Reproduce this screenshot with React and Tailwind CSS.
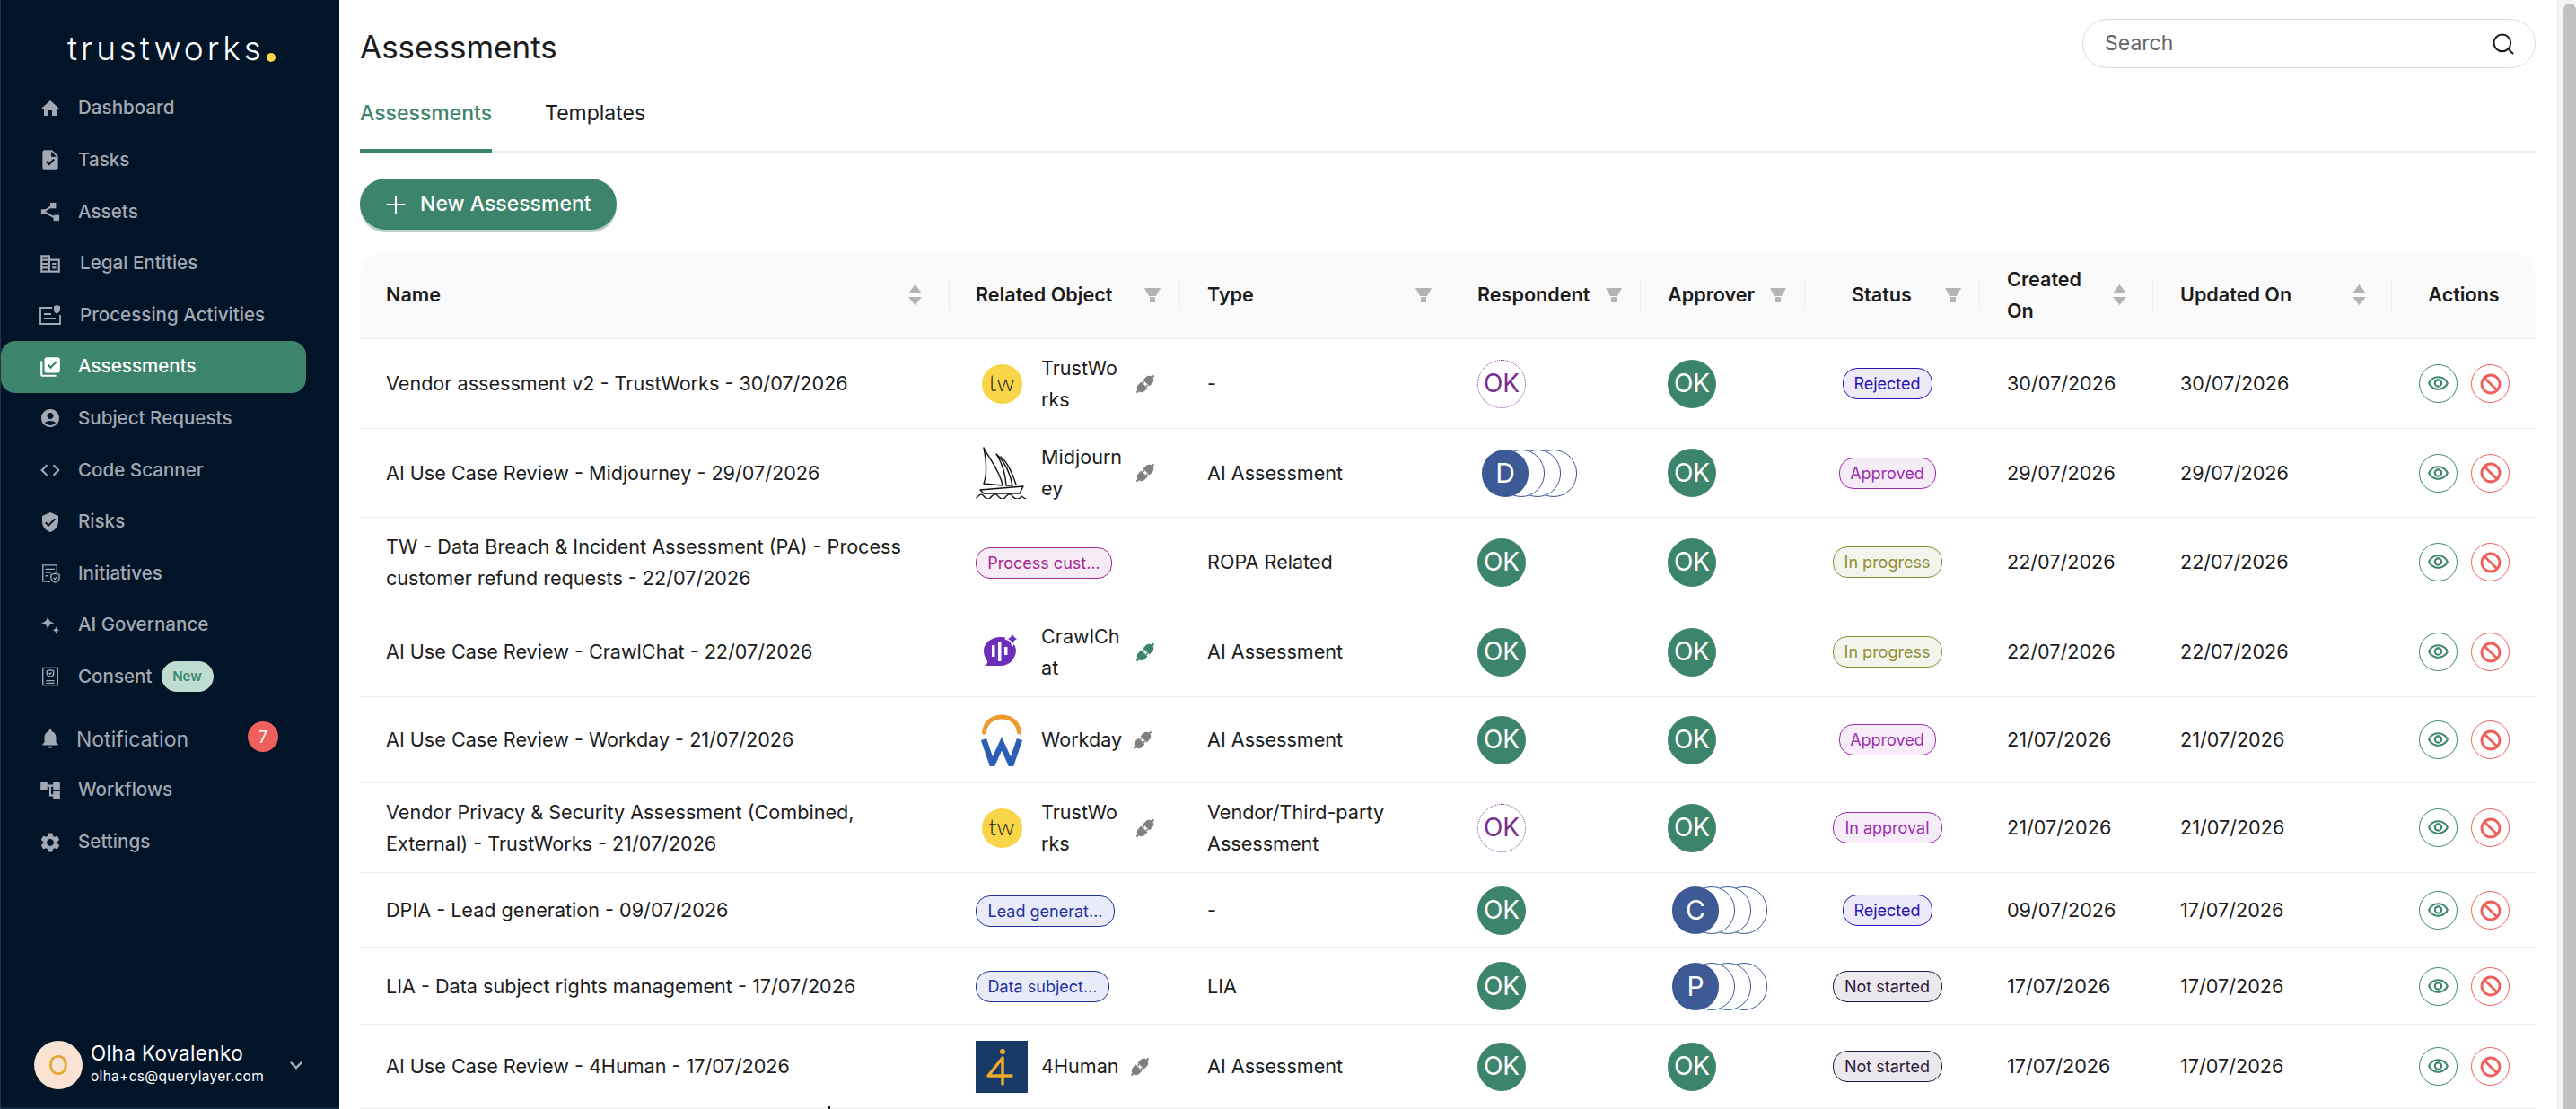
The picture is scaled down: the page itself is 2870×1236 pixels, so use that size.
import React from "react";
import {
  MdHome, MdTask, MdOutlineCorporateFare, MdLibraryAddCheck, MdAccountCircle, MdCode, MdVerifiedUser,
  MdNotifications, MdAccountTree, MdSettings, MdKeyboardArrowDown, MdOutlineVisibility,
} from "react-icons/md";
import { Plus, Search, Ban } from "lucide-react";

const AssetsIcon = (p) => (
  <svg viewBox="0 0 24 24" fill="currentColor" {...p}>
    <rect x="12" y="1" width="7" height="7" /><rect x="1" y="9" width="6" height="6" /><rect x="16" y="16" width="7" height="7" />
    <path d="M14 5 4 12l15 8" fill="none" stroke="currentColor" strokeWidth="2.2" />
  </svg>
);
const ProcessingIcon = (p) => (
  <svg viewBox="0 0 24 24" fill="none" stroke="currentColor" strokeWidth="1.8" {...p}>
    <path d="M14 4H1v18h22V12" /><path d="M5 11h8M5 16h13" />
    <path d="M19 1l4 1.2v4c0 2-2 3.5-4 4.3-2-.8-3-2.3-3-4.3v-4z" fill="currentColor" stroke="none" />
  </svg>
);
const InitiativesIcon = (p) => (
  <svg viewBox="0 0 24 24" fill="none" stroke="currentColor" strokeWidth="1.5" {...p}>
    <path d="M12 22H3V2h17v9" /><path d="M6 7h11M6 11h7M6 15h4" />
    <path d="M18 12l5 1.6v4c0 2.6-2.5 4.4-5 5.4-2.5-1-5-2.8-5-5.4v-4z" /><path d="M16 17.5l1.5 1.5 3-3" />
  </svg>
);
const ConsentIcon = (p) => (
  <svg viewBox="0 0 24 24" fill="none" stroke="currentColor" strokeWidth="1.5" {...p}>
    <rect x="3" y="1.5" width="18" height="21" /><path d="M7 17h10M7 20h10" />
    <path d="M12 4l4 1.2v3.3c0 2-2 3.3-4 4-2-.7-4-2-4-4V5.2z" /><path d="M10.5 8l1 1 2-2" />
  </svg>
);
const SparkIcon = (p) => (
  <svg viewBox="0 0 24 24" fill="currentColor" {...p}>
    <path d="M9 0c.6 5.5 2.500 8 8 9-5.500 1-7.400 3.500-8 9-.6-5.500-2.500-8-8-9 5.500-1 7.400-3.500 8-9z" />
    <path d="M19 13c.3 3 1.300 4.200 4.500 4.800-3.200.6-4.200 1.800-4.500 5.200-.3-3.400-1.300-4.600-4.500-5.200 3.200-.6 4.200-1.800 4.500-4.800z" />
  </svg>
);
const Plug = ({ className }) => (
  <svg viewBox="0 0 24 24" fill="currentColor" className={className}>
    <g transform="rotate(45 12 12)">
      <path d="M7 10.500V6a5 5 0 0 1 10 0v4.500z" /><rect x="11" y="-1.500" width="2" height="3.500" />
      <path d="M7 13.500h10V18a5 5 0 0 1-10 0z" /><rect x="11" y="22" width="2" height="3.500" />
      <rect x="8.500" y="11" width="1.800" height="2" /><rect x="13.700" y="11" width="1.800" height="2" />
    </g>
  </svg>
);
const SortIcon = () => (
  <svg viewBox="0 0 15 23" className="w-[15px] h-[23px] shrink-0 text-[#b4b4b4]" fill="currentColor">
    <path d="M7.500 0 15 10H0zM0 14h15l-7.500 9z" />
  </svg>
);
const FilterIcon = () => (
  <svg viewBox="0 0 18 16" className="w-[18px] h-[16px] shrink-0 text-[#b4b4b4]" fill="currentColor">
    <path d="M0 0h18l-5 9H5zM6 10h6v6H6z" />
  </svg>
);

const TwLogo = () => (
  <div className="w-[45px] h-[44px] rounded-full bg-[#f9d548] flex items-center justify-center text-[26px] leading-none font-light text-[#1f1f1f] font-['Lato',sans-serif] pb-[3px]">tw</div>
);
const MjLogo = () => (
  <svg viewBox="0 0 58 58" className="w-[58px] h-[58px]" fill="none" stroke="#111" strokeWidth="1.400" strokeLinejoin="round" strokeLinecap="round">
    <path d="M9 1C13 10 27 26 30 43L9 41c3-8 4-20 0-40z" />
    <path d="M23 8c8 7 15 20 18 35l-7 0C33 28 29 17 23 8z" />
    <path d="M28 11c7 6 13 18 17 31" />
    <path d="M5 48l48-4-4 8H9z" />
    <path d="M1 57c4-5 6-5 9-1 3 3 5 3 8-1 3-3 5-3 8 1 3 3 6 3 8-1 3-3 5-3 8 1 3 3 7 3 9-1l6 4" />
  </svg>
);
const CrawlLogo = () => (
  <svg viewBox="0 0 58 58" className="w-[58px] h-[58px]">
    <path d="M28 12a17 17 0 0 1 17 14c0 10-7 18-17 18H10c3-2 4-4 2-7-2-3-3-6-3-10 0-8 8-15 19-15z" fill="#6d2eb8" />
    <rect x="18" y="21" width="3.500" height="13" fill="#fff" /><rect x="25" y="17" width="3.500" height="22" fill="#fff" />
    <rect x="32" y="23" width="3.500" height="9" fill="#fff" />
    <path d="M41 6c1.200 5 3 7 8 8-5 1-6.800 3-8 8-1.200-5-3-7-8-8 5-1 6.800-3 8-8z" fill="#6d2eb8" stroke="#fff" strokeWidth="1.500" />
  </svg>
);
const WdLogo = () => (
  <svg viewBox="0 0 58 58" className="w-[58px] h-[58px]" fill="none">
    <path d="M9.500 20C11 8 20 3 29 3s18 5 19.500 17" stroke="#ee9a33" strokeWidth="5" strokeLinecap="round" />
    <path d="M9 28l9.500 28L29 33l10.500 23L49 28" stroke="#2a5fb5" strokeWidth="6.500" />
  </svg>
);
const FhLogo = () => (
  <svg viewBox="0 0 58 58" className="w-[58px] h-[58px]">
    <rect width="58" height="58" fill="#183a66" />
    <circle cx="30" cy="12" r="3" fill="#eea92d" />
    <path d="M30 19 14 39h26M30 19v29" stroke="#eea92d" strokeWidth="3.500" fill="none" strokeLinecap="round" strokeLinejoin="round" />
  </svg>
);

const nav = [
  ["Dashboard", MdHome, "w-[24px] h-[24px]"],
  ["Tasks", MdTask, "w-[26px] h-[26px]"],
  ["Assets", AssetsIcon, "w-[22px] h-[22px]"],
  ["Legal Entities", MdOutlineCorporateFare, "w-[26px] h-[26px]"],
  ["Processing Activities", ProcessingIcon, "w-[24px] h-[24px]"],
  ["Assessments", MdLibraryAddCheck, "w-[26px] h-[26px]"],
  ["Subject Requests", MdAccountCircle, "w-[24px] h-[24px]"],
  ["Code Scanner", MdCode, "w-[26px] h-[26px]"],
  ["Risks", MdVerifiedUser, "w-[24px] h-[24px]"],
  ["Initiatives", InitiativesIcon, "w-[22px] h-[22px]"],
  ["AI Governance", SparkIcon, "w-[22px] h-[22px]"],
  ["Consent", ConsentIcon, "w-[22px] h-[22px]"],
];

function NavItem({ label, Icon, size, active, badge }) {
  return (
    <div className={`flex items-center h-[57.6px] pl-[42px] w-[340px] rounded-[16px] text-[20.600px] font-medium ${active ? "bg-[#3d846c] text-white" : "text-[#a3a9b3]"}`}>
      <span className="w-[26px] flex items-center justify-center shrink-0"><Icon className={size} /></span>
      <span className={label === "Legal Entities" || label === "Processing Activities" ? "ml-[20px]" : "ml-[18px]"}>{label}</span>
      {badge && <span className="ml-[10px] h-[34px] w-[58px] rounded-full bg-[#bfdcd3] text-[#3d846c] text-[15px] font-semibold flex items-center justify-center">{badge}</span>}
    </div>
  );
}

function Sidebar() {
  return (
    <aside className="w-[378px] h-[1236px] shrink-0 bg-[#021428] border-l border-[#263446] flex flex-col">
      <div className="h-[92px] shrink-0 flex items-start pl-[74px] pt-[32px]">
        <span className="text-[37px] leading-[44px] font-light text-white tracking-[3.900px]">trustworks</span>
        <span className="w-[10px] h-[10px] rounded-full bg-[#f9d548] mt-[27px] ml-[2px]" />
      </div>
      {nav.map(([l, I, s]) => <NavItem key={l} label={l} Icon={I} size={s} active={l === "Assessments"} badge={l === "Consent" ? "New" : null} />)}
      <div className="h-[10px] shrink-0" />
      <div className="border-t border-[#3b4958] h-[59px] shrink-0 flex items-center pl-[42px] text-[#a3a9b3] relative">
        <span className="w-[26px] flex justify-center"><MdNotifications className="w-[26px] h-[26px]" /></span>
        <span className="ml-[16px] text-[23px] pt-[2px]">Notification</span>
        <span className="absolute left-[275px] top-[10px] w-[34px] h-[34px] rounded-full bg-[#ef5f5b] text-white text-[18px] flex items-center justify-center">7</span>
      </div>
      <NavItem label="Workflows" Icon={MdAccountTree} size="w-[26px] h-[26px]" />
      <NavItem label="Settings" Icon={MdSettings} size="w-[26px] h-[26px]" />
      <div className="mt-auto flex items-center pl-[37px] pb-[20px] border-b-2 border-[#0f2a45]">
        <div className="w-[54px] h-[54px] rounded-full bg-[#fae3d2] text-[#e2a72e] text-[30px] flex items-center justify-center shrink-0">O</div>
        <div className="ml-[9px] w-[208px] -mt-[2px]">
          <div className="text-white text-[22.500px] leading-[28px] tracking-[0.4px]">Olha Kovalenko</div>
          <div className="text-white text-[15.500px] leading-[24px] tracking-[0.3px]">olha+cs@querylayer.com</div>
        </div>
        <MdKeyboardArrowDown className="w-[28px] h-[28px] text-[#a3a9b3] ml-[7px]" />
      </div>
    </aside>
  );
}

const Ok = ({ dashed }) => (
  <div className={`w-[54px] h-[54px] rounded-full flex items-center justify-center text-[28px] ${dashed ? "border border-dotted border-[#7b2d8e] text-[#7b2d8e] bg-white" : "bg-[#3d846c] text-white"}`}>OK</div>
);
const Stack = ({ letter }) => (
  <div className="flex relative pl-[5px]">
    <div className="w-[52px] h-[53px] rounded-full bg-[#3d5a96] text-white text-[30px] flex items-center justify-center relative z-30">{letter}</div>
    <div className="w-[52px] h-[53px] rounded-full border border-[#3d5a96] bg-white -ml-[34px] relative z-20" />
    <div className="w-[52px] h-[53px] rounded-full border border-[#3d5a96] bg-white -ml-[34px] relative z-10" />
    <div className="w-[52px] h-[53px] rounded-full border border-[#3d5a96] bg-white -ml-[34px]" />
  </div>
);
const statusStyle = {
  Rejected: "w-[100px] border-[#2a12b5] text-[#2a12b5] bg-[#ece9f8]",
  Approved: "w-[108px] border-[#9c2fae] text-[#9c2fae] bg-[#f5ecf8]",
  "In progress": "w-[122px] border-[#8e8e35] text-[#8e8e35] bg-[#f3f4ec]",
  "In approval": "w-[122px] border-[#9c2fae] text-[#9c2fae] bg-[#f5ecf8]",
  "Not started": "w-[122px] border-[#2c1a3c] text-[#2c1a3c] bg-[#ece9ee]",
};
const Tag = ({ text, cls }) => (
  <span className={`inline-flex items-center justify-center h-[35px] rounded-[16px] border text-[18px] ${cls}`}>{text}</span>
);
const Obj = ({ logo, name, plug, wrapped }) => (
  <div className="flex items-center pl-[29px]">
    <div className="w-[58px] flex items-center justify-center shrink-0">{logo}</div>
    <div className={`ml-[15px] ${wrapped ? "w-[93px]" : ""}`}>{name}</div>
    <Plug className={`ml-[11px] w-[24px] h-[24px] shrink-0 ${plug || "text-[#808080]"}`} />
  </div>
);
const pink = "w-[152px] border-[#a8258f] text-[#a8258f] bg-[#f5ecf5]";
const blue = "border-[#2230a0] text-[#2230a0] bg-[#e9ebf8]";
const tw = <>TrustWo<br />rks</>;
const rows = [
  { h: "h-[100px]", name: "Vendor assessment v2 - TrustWorks - 30/07/2026", obj: <Obj logo={<TwLogo />} name={tw} wrapped />, type: "-", resp: <Ok dashed />, appr: <Ok />, status: "Rejected", c: "30/07/2026", u: "30/07/2026" },
  { h: "h-[99px]", name: "AI Use Case Review - Midjourney - 29/07/2026", obj: <Obj logo={<MjLogo />} name={<>Midjourn<br />ey</>} wrapped />, type: "AI Assessment", resp: <Stack letter="D" />, appr: <Ok />, status: "Approved", c: "29/07/2026", u: "29/07/2026" },
  { h: "h-[100px]", name: "TW - Data Breach & Incident Assessment (PA) - Process customer refund requests - 22/07/2026", obj: <div className="pl-[29px]"><Tag text="Process cust..." cls={pink} /></div>, type: "ROPA Related", resp: <Ok />, appr: <Ok />, status: "In progress", c: "22/07/2026", u: "22/07/2026" },
  { h: "h-[100px]", name: "AI Use Case Review - CrawlChat - 22/07/2026", obj: <Obj logo={<CrawlLogo />} name={<>CrawlCh<br />at</>} wrapped plug="text-[#3d846c]" />, type: "AI Assessment", resp: <Ok />, appr: <Ok />, status: "In progress", c: "22/07/2026", u: "22/07/2026" },
  { h: "h-[96px]", name: "AI Use Case Review - Workday - 21/07/2026", obj: <Obj logo={<WdLogo />} name="Workday" />, type: "AI Assessment", resp: <Ok />, appr: <Ok />, status: "Approved", c: "21/07/2026", u: "21/07/2026" },
  { h: "h-[100px]", name: "Vendor Privacy & Security Assessment (Combined, External) - TrustWorks - 21/07/2026", obj: <Obj logo={<TwLogo />} name={tw} wrapped />, type: "Vendor/Third-party Assessment", resp: <Ok dashed />, appr: <Ok />, status: "In approval", c: "21/07/2026", u: "21/07/2026" },
  { h: "h-[84px]", name: "DPIA - Lead generation - 09/07/2026", obj: <div className="pl-[29px]"><Tag text="Lead generat..." cls={`w-[155px] ${blue}`} /></div>, type: "-", resp: <Ok />, appr: <Stack letter="C" />, status: "Rejected", c: "09/07/2026", u: "17/07/2026" },
  { h: "h-[85px]", name: "LIA - Data subject rights management - 17/07/2026", obj: <div className="pl-[29px]"><Tag text="Data subject..." cls={`w-[149px] ${blue}`} /></div>, type: "LIA", resp: <Ok />, appr: <Stack letter="P" />, status: "Not started", c: "17/07/2026", u: "17/07/2026" },
  { h: "h-[94px]", name: "AI Use Case Review - 4Human - 17/07/2026", obj: <Obj logo={<FhLogo />} name="4Human" />, type: "AI Assessment", resp: <Ok />, appr: <Ok />, status: "Not started", c: "17/07/2026", u: "17/07/2026" },
];

const Th = ({ children, cls, last, right }) => (
  <th className={`p-0 font-semibold text-left bg-[#fafafa] border-b border-[#eeeeee] ${last ? "rounded-tr-[28px]" : ""}`}>
    <div className={`flex items-center h-[35px] justify-between ${last ? "justify-center" : "border-r border-[#ececec]"} ${cls}`}>
      {children}
      {right}
    </div>
  </th>
);

function Table() {
  return (
    <table className="table-fixed w-[2424px] border-separate border-spacing-0 text-[21.600px] leading-[35px] text-[#1c1c1c]">
      <colgroup>
        <col className="w-[657px]" /><col className="w-[257px]" /><col className="w-[301px]" /><col className="w-[212px]" /><col className="w-[183px]" />
        <col className="w-[195px]" /><col className="w-[193px]" /><col className="w-[266px]" /><col className="w-[160px]" />
      </colgroup>
      <thead>
        <tr className="h-[98px]">
          <th className="p-0 font-semibold text-left bg-[#fafafa] border-b border-[#eeeeee] rounded-tl-[28px]">
            <div className="flex items-center h-[35px] justify-between border-r border-[#ececec] pl-[29px] pr-[30px]">Name<SortIcon /></div>
          </th>
          <Th cls="pl-[29px] pr-[21px]" right={<FilterIcon />}>Related Object</Th>
          <Th cls="pl-[30px] pr-[20px]" right={<FilterIcon />}>Type</Th>
          <Th cls="pl-[30px] pr-[20px]" right={<FilterIcon />}>Respondent</Th>
          <Th cls="pl-[30px] pr-[20px]" right={<FilterIcon />}>Approver</Th>
          <Th cls="pl-[52px] pr-[20px]" right={<FilterIcon />}>Status</Th>
          <Th cls="pl-[30px] pr-[29px]" right={<SortIcon />}><span className="w-[90px]">Created On</span></Th>
          <Th cls="pl-[30px] pr-[28px]" right={<SortIcon />}>Updated On</Th>
          <Th cls="" last>Actions</Th>
        </tr>
      </thead>
      <tbody>
        {rows.map((r, i) => (
          <tr key={i} className={r.h}>
            <td className="p-0 pl-[29px] pr-[37px] border-b border-[#eeeeee]">{r.name}</td>
            <td className="p-0 border-b border-[#eeeeee]">{r.obj}</td>
            <td className="p-0 pl-[30px] pr-[30px] border-b border-[#eeeeee]">{r.type}</td>
            <td className="p-0 pl-[30px] border-b border-[#eeeeee]">{r.resp}</td>
            <td className="p-0 pl-[30px] border-b border-[#eeeeee]">{r.appr}</td>
            <td className="p-0 pr-[12px] border-b border-[#eeeeee]">
              <div className="flex justify-center"><Tag text={r.status} cls={statusStyle[r.status]} /></div>
            </td>
            <td className="p-0 pl-[30px] border-b border-[#eeeeee]">{r.c}</td>
            <td className="p-0 pl-[30px] border-b border-[#eeeeee]">{r.u}</td>
            <td className="p-0 pl-[30px] border-b border-[#eeeeee]">
              <div className="flex gap-[15px]">
                <div className="w-[43px] h-[43px] rounded-full border border-[#3d846c] text-[#3d846c] flex items-center justify-center"><MdOutlineVisibility className="w-[25px] h-[25px]" /></div>
                <div className="w-[43px] h-[43px] rounded-full border border-[#ef5f5b] text-[#ef5f5b] flex items-center justify-center"><Ban strokeWidth={2.800} className="w-[24px] h-[24px]" /></div>
              </div>
            </td>
          </tr>
        ))}
      </tbody>
    </table>
  );
}

export default function App() {
  return (
    <div className="relative w-[2870px] h-[1236px] flex overflow-hidden bg-white font-['Inter',sans-serif]">
      <Sidebar />
      <main className="flex-1 min-w-0 pl-[23px] pr-[24px]">
        <div className="flex justify-between h-[99px] pt-[21px]">
          <h1 className="text-[35px] leading-[62px] text-[#1c1c1c]">Assessments</h1>
          <div className="w-[505px] h-[55px] rounded-full border border-[#dcdcdc] flex items-center justify-between pl-[24px] pr-[21px]">
            <span className="text-[23px] text-[#666666]">Search</span>
            <Search strokeWidth={1.7} className="w-[28px] h-[28px] text-[#1c1c1c]" />
          </div>
        </div>
        <div className="flex gap-[59px] h-[71px] border-b-2 border-[#eeeeee] text-[23px] leading-[54px]">
          <div className="text-[#3d846c] font-medium h-[71px] border-b-4 border-[#3d846c]">Assessments</div>
          <div className="text-[#1c1c1c]">Templates</div>
        </div>
        <div className="h-[110px] pt-[29px]">
          <button className="w-[286px] h-[57px] rounded-full bg-[#3d846c] shadow-[0_3px_0_#bcd0c8] text-white text-[23px] font-medium flex items-center pl-[24px]">
            <Plus strokeWidth={1.5} className="w-[32px] h-[32px] mr-[11px]" />New Assessment
          </button>
        </div>
        <Table />
      </main>
      <div className="w-[21px] shrink-0 bg-[#f5f5f5] border-l border-[#ebebeb] pl-[6px] pt-[4px]">
        <div className="h-full rounded-t-[7px] bg-[#c1c1c1]" />
      </div>
      <span className="absolute left-[923px] top-[1233px] w-[2px] h-[3px] bg-[#1c1c1c]" />
    </div>
  );
}
